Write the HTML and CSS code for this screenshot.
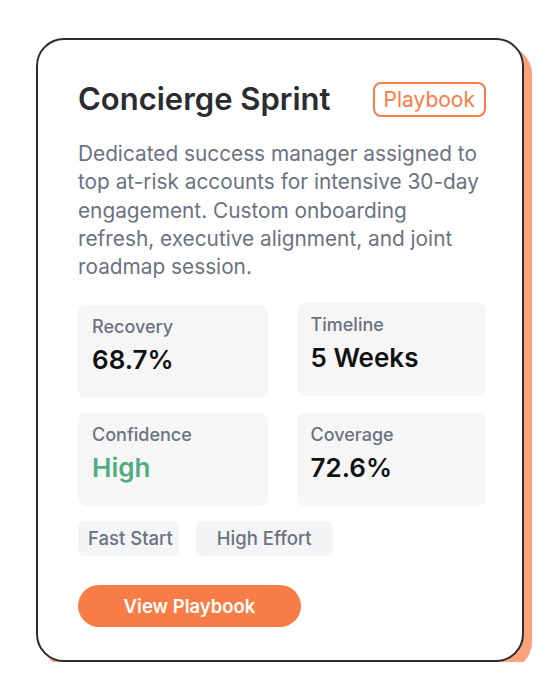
FILE: index.html
```html
<!DOCTYPE html>
<html lang="en">
<head>
<meta charset="utf-8">
<title>Concierge Sprint</title>
<link rel="stylesheet" href="styles.css">
</head>
<body>
<div class="page">
  <article class="card">
    <header class="card-head">
      <h1 class="title">Concierge Sprint</h1>
      <span class="badge">Playbook</span>
    </header>
    <p class="desc">Dedicated success manager assigned to top at-risk accounts for intensive 30-day engagement. Custom onboarding refresh, executive alignment, and joint roadmap session.</p>
    <div class="stats">
      <div class="stat stat-low">
        <div class="stat-label">Recovery</div>
        <div class="stat-value">68.7%</div>
      </div>
      <div class="stat">
        <div class="stat-label">Timeline</div>
        <div class="stat-value">5 Weeks</div>
      </div>
      <div class="stat">
        <div class="stat-label">Confidence</div>
        <div class="stat-value stat-good">High</div>
      </div>
      <div class="stat">
        <div class="stat-label">Coverage</div>
        <div class="stat-value">72.6%</div>
      </div>
    </div>
    <div class="tags">
      <span class="tag">Fast Start</span>
      <span class="tag tag-wide">High Effort</span>
    </div>
    <button class="cta" type="button">View Playbook</button>
  </article>
</div>
</body>
</html>
```
FILE: styles.css
```css
* { box-sizing: border-box; }
html, body { margin: 0; background: #ffffff; }
body {
  font-family: Inter, "Noto Sans", "Liberation Sans", sans-serif;
  color: #2b2c31;
}
.page {
  padding: 38px 36px 0 36px;
}
.card {
  background: #ffffff;
  border: 2px solid #2b2c31;
  border-radius: 28px;
  box-shadow: 8px 8px 0 #fea27b;
  padding: 40px 36px 33px 40px;
}
.card-head {
  display: flex;
  align-items: center;
  justify-content: space-between;
}
.title {
  margin: 0;
  font-size: 31px;
  font-weight: 600;
  line-height: 38px;
  color: #2b2c31;
}
.badge {
  border: 2px solid #f87d47;
  color: #f87d47;
  border-radius: 8px;
  font-size: 21px;
  line-height: 25px;
  padding: 3px 9px;
}
.desc {
  margin: 22px 0 0 0;
  font-size: 20.8px;
  line-height: 28.25px;
  color: #6b7280;
}
.stats {
  display: grid;
  grid-template-columns: 1fr 1fr;
  column-gap: 29px;
  row-gap: 15px;
  align-items: start;
  margin-top: 21.5px;
}
.stat {
  background: #f6f6f7;
  border-radius: 8px;
  height: 93px;
  padding: 11.5px 14px;
}
.stat-low { margin-top: 2px; }
.stat-label {
  font-size: 18px;
  font-weight: 500;
  line-height: 22px;
  color: #6b7280;
}
.stat-value {
  margin-top: 5.5px;
  font-size: 26px;
  font-weight: 600;
  line-height: 32px;
  color: #111111;
}
.stat-good { color: #50ad7e; }
.tags {
  display: flex;
  gap: 17px;
  margin-top: 15px;
}
.tag {
  background: #f4f5f6;
  border-radius: 6px;
  color: #6b7280;
  font-size: 18.5px;
  font-weight: 500;
  line-height: 35px;
  height: 35px;
  padding: 0 6px 0 10px;
}
.tag-wide { padding: 0 21px; }
.cta {
  display: block;
  margin-top: 29px;
  width: 223px;
  height: 42px;
  border: 0;
  border-radius: 21px;
  background: #f87c45;
  color: #ffffff;
  font-family: inherit;
  font-size: 18.5px;
  font-weight: 600;
  padding: 0;
}
```
